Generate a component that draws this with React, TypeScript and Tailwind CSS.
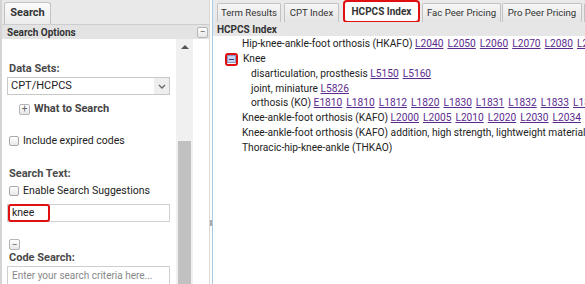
import React from "react";

const font = { fontFamily: 'Roboto, "Liberation Sans", Arial, sans-serif' };

function Link({ c }: { c: string }) {
  return <a className="text-[#5b2a8e] underline mr-[4px]">{c}</a>;
}

function Box({ sign }: { sign: string }) {
  return (
    <span className="shrink-0 inline-flex items-center justify-center w-[11px] h-[11px] border border-[#b5b5b5] rounded-[2px] bg-gradient-to-b from-white to-[#e6e6e6] text-[#666] text-[10px] leading-none">
      {sign}
    </span>
  );
}

function Check({ label }: { label: string }) {
  return (
    <div className="h-[14px] flex items-center gap-[4px] text-[#222] pl-[2px] text-[10.5px]">
      <span className="w-[10px] h-[10px] border border-[#a8a8a8] rounded-[2px] bg-gradient-to-b from-white to-[#e8e8e8]" />
      <span>{label}</span>
    </div>
  );
}

function Tab({ label, w }: { label: string; w: string }) {
  return (
    <div className={`shrink-0 h-[19px] ${w} flex items-center justify-center border border-b-0 border-[#c2c2c2] rounded-t-[2px] bg-gradient-to-b from-[#f6f6f6] to-[#e4e4e4] text-[#333] text-[9.6px] overflow-hidden`}>
      {label}
    </div>
  );
}

export default function App() {
  const l1 = ["L2040", "L2050", "L2060", "L2070", "L2080", "L2090"];
  const l5 = ["E1810", "L1810", "L1812", "L1820", "L1830", "L1831", "L1832", "L1833", "L1834", "L1836"];
  const l6 = ["L2000", "L2005", "L2010", "L2020", "L2030", "L2034", "L2035"];
  return (
    <div className="w-[585px] h-[284px] overflow-hidden flex bg-white text-[10px] text-[#222]" style={font}>
      {/* Left panel */}
      <div className="w-[210px] shrink-0 h-full flex flex-col border-l-[2px] border-[#d4d4d4] bg-white border-r border-r-[#d8d8d8]">
        <div className="h-[25px] bg-[#e9e9e9] border-b border-[#cdcdcd] flex items-end pl-[2px]">
          <div className="h-[22px] w-[47px] flex items-center justify-center border border-b-0 border-[#c2c2c2] rounded-t-[3px] bg-gradient-to-b from-[#fbfbfb] to-[#ececec] font-bold text-[#333] text-[11px]">
            Search
          </div>
        </div>
        <div className="h-[14px] bg-[#e3e3e3] flex items-center justify-between pl-[5px] pr-[1px]">
          <span className="font-bold text-[#333] text-[10px]">Search Options</span>
          <Box sign="−" />
        </div>
        <div className="flex-1 flex overflow-hidden pr-[16px]">
          <div className="flex-1 flex flex-col pl-[5px] pr-[6px] overflow-hidden leading-[14px]">
            <div className="h-px bg-[#d8d8d8] w-[80px] ml-[1px]" />
            <div className="mt-[23px] h-[14px] text-[11px] text-[#4a4a4a] font-bold pl-[2px]">Data Sets:</div>
            <div className="mt-[1px] h-[18px] border border-[#c8c8c8] flex items-center justify-between pl-[3px] text-[11px] shrink-0">
              <span>CPT/HCPCS</span>
              <span className="w-[15px] h-full bg-[#eeeeee] flex items-center justify-center">
                <svg width="8" height="5" viewBox="0 0 8 5"><path d="M1 1 L4 4 L7 1" fill="none" stroke="#666" strokeWidth="1.3" /></svg>
              </span>
            </div>
            <div className="mt-[7px] h-[14px] ml-[12px] flex items-center gap-[4px]">
              <Box sign="+" />
              <span className="font-bold text-[#444] text-[11px]">What to Search</span>
            </div>
            <div className="mt-[18px]">
              <Check label="Include expired codes" />
            </div>
            <div className="mt-[19px] h-[14px] font-bold text-[#4a4a4a] text-[11px] pl-[2px]">Search Text:</div>
            <div className="mt-[3px]">
              <Check label="Enable Search Suggestions" />
            </div>
            <div className="mt-[6px] h-[18px] shrink-0 border border-[#d0d0d0] relative flex items-center pl-[4px]">
              <span className="text-[10.5px]">knee</span>
              <div className="absolute left-[0px] top-[-1px] w-[42px] h-[18px] border-[2px] border-[#e01010] rounded-[3px]" />
            </div>
            <div className="mt-[17px] h-[11px] flex pl-[2px]">
              <Box sign="−" />
            </div>
            <div className="mt-[1px] h-[14px] font-bold text-[#4a4a4a] text-[11px] pl-[2px]">Code Search:</div>
            <div className="mt-[1px] h-[19px] shrink-0 border border-[#cfcfcf] flex items-center pl-[4px] text-[#888] text-[10px] whitespace-nowrap">
              Enter your search criteria here...
            </div>
          </div>
          <div className="w-[17px] shrink-0 bg-[#f0f0f0] flex flex-col items-center">
            <div className="mt-[6px] w-0 h-0 border-l-[4px] border-r-[4px] border-b-[4px] border-l-transparent border-r-transparent border-b-[#555]" />
            <div className="mt-[92px] w-[13px] flex-1 bg-[#c1c1c1]" />
          </div>
        </div>
      </div>
      {/* splitter */}
      <div className="w-[2px] shrink-0 h-full bg-white flex items-center">
        <div className="w-[2px] h-[6px] bg-[#aaaaaa] mt-[162px]" />
      </div>
      {/* Right panel */}
      <div className="flex-1 min-w-0 h-full flex flex-col border-l border-[#a9c7e6] overflow-hidden">
        <div className="h-[22px] shrink-0 bg-[#e9e9e9] flex items-end pl-[4px] whitespace-nowrap">
          <Tab label="Term Results" w="w-[64px]" />
          <div className="w-[3px] shrink-0" />
          <Tab label="CPT Index" w="w-[55px]" />
          <div className="w-[4px] shrink-0" />
          <div className="shrink-0 h-[23px] w-[77px] flex items-center justify-center border-[2px] border-[#e01010] rounded-[4px] bg-white font-bold text-[10px] text-[#333] -mb-px self-start">
            HCPCS Index
          </div>
          <div className="w-[2px] shrink-0" />
          <Tab label="Fac Peer Pricing" w="w-[79px]" />
          <div className="w-[1px] shrink-0" />
          <Tab label="Pro Peer Pricing" w="w-[80px]" />
          <div className="w-[2px] shrink-0" />
          <Tab label="Other" w="w-[40px]" />
        </div>
        <div className="h-[14px] shrink-0 bg-[#e6e6e6] flex items-center pl-[4px] font-bold text-[10px] text-[#333]">HCPCS Index</div>
        <div className="flex-1 whitespace-nowrap leading-[14.8px] text-[#222] text-[10.2px] pt-[1px]">
          <div className="pl-[29px]">
            Hip-knee-ankle-foot orthosis (HKAFO) {l1.map((c) => <Link key={c} c={c} />)}
          </div>
          <div className="pl-[12px] h-[15px] flex items-center">
            <span className="shrink-0 mr-[5px] flex items-center justify-center w-[13px] h-[13px] border-[2px] border-[#e01010] rounded-[3px]">
              <span className="w-[9px] h-[8px] bg-[#c7d4ef] border border-[#8898c8] flex items-center justify-center">
                <span className="w-[5px] h-px bg-[#333a80]" />
              </span>
            </span>
            Knee
          </div>
          <div className="pl-[38px]">
            disarticulation, prosthesis <Link c="L5150" /><Link c="L5160" />
          </div>
          <div className="pl-[38px]">
            joint, miniature <Link c="L5826" />
          </div>
          <div className="pl-[38px]">
            orthosis (KO) {l5.map((c) => <Link key={c} c={c} />)}
          </div>
          <div className="pl-[29px]">
            Knee-ankle-foot orthosis (KAFO) {l6.map((c) => <Link key={c} c={c} />)}
          </div>
          <div className="pl-[29px]">Knee-ankle-foot orthosis (KAFO) addition, high strength, lightweight material</div>
          <div className="pl-[29px]">Thoracic-hip-knee-ankle (THKAO)</div>
        </div>
      </div>
    </div>
  );
}
